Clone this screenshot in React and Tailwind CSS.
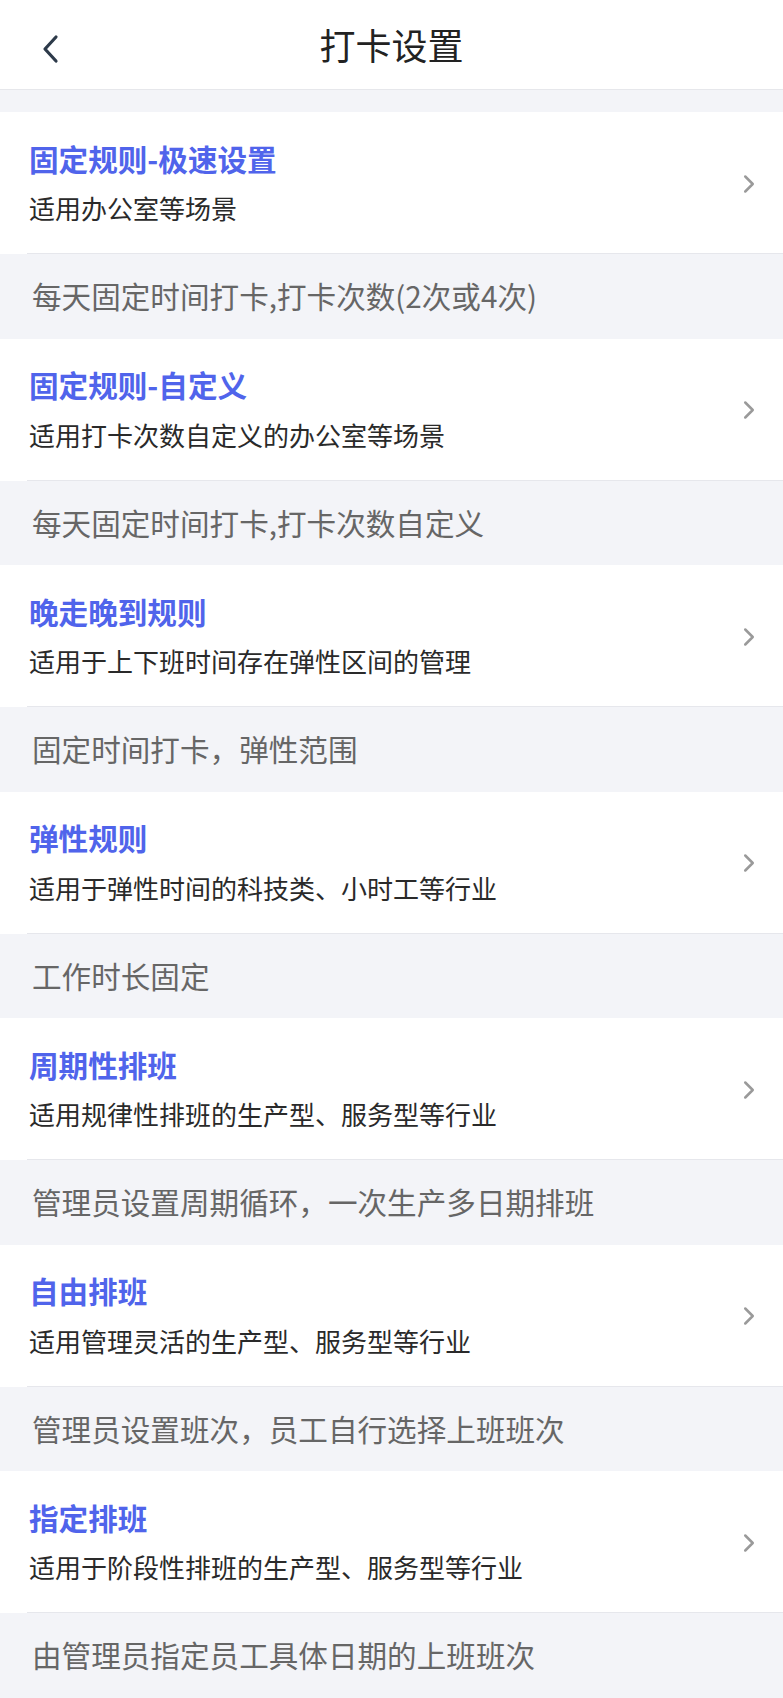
import { ChevronRight } from 'lucide-react';

const rules = [
  { title: '固定规则-极速设置', sub: '适用办公室等场景', desc: '每天固定时间打卡,打卡次数(2次或4次)' },
  { title: '固定规则-自定义', sub: '适用打卡次数自定义的办公室等场景', desc: '每天固定时间打卡,打卡次数自定义' },
  { title: '晚走晚到规则', sub: '适用于上下班时间存在弹性区间的管理', desc: '固定时间打卡，弹性范围' },
  { title: '弹性规则', sub: '适用于弹性时间的科技类、小时工等行业', desc: '工作时长固定' },
  { title: '周期性排班', sub: '适用规律性排班的生产型、服务型等行业', desc: '管理员设置周期循环，一次生产多日期排班' },
  { title: '自由排班', sub: '适用管理灵活的生产型、服务型等行业', desc: '管理员设置班次，员工自行选择上班班次' },
  { title: '指定排班', sub: '适用于阶段性排班的生产型、服务型等行业', desc: '由管理员指定员工具体日期的上班班次' },
];

const App = () => {
  return (
    <div className="min-h-screen bg-[#f3f4f8]" style={{ fontFamily: '"Noto Sans CJK SC", "Noto Sans", sans-serif' }}>
      {/* Header */}
      <div className="h-[90px] bg-white border-b border-[#e6e7eb] flex items-center relative">
        <div className="absolute left-[40px] top-[34px] w-[20px] h-[30px] flex items-center justify-center">
          <svg width="18" height="30" viewBox="0 0 18 30" fill="none">
            <path d="M15 3 L4 15 L15 27" stroke="#2d3a4a" strokeWidth="3.2" strokeLinecap="round" strokeLinejoin="round" />
          </svg>
        </div>
        <h1 className="w-full text-center text-[36px] text-[#222] leading-none -mt-[2px]">打卡设置</h1>
      </div>

      <div className="h-[22px]" />

      {rules.map((r, i) => (
        <div key={i}>
          <div className="h-[142px] bg-white flex items-center relative">
            <div className="flex-1 pl-[29px]">
              <p className="text-[29.6px] font-bold text-[#5064eb] leading-none -mt-[1px]">{r.title}</p>
              <p className="text-[26px] text-[#2a2a2a] leading-none mt-[22px]">{r.sub}</p>
            </div>
            <ChevronRight className="text-[#9a9a9a] mr-[19px] mt-[1px]" size={30} strokeWidth={2} />
            <div className="absolute left-[27px] right-0 bottom-0 h-px bg-[#e6e7ec]" />
          </div>
          <div className="h-[84.5px] flex items-center pl-[32px]">
            <p className="text-[29.6px] text-[#666] leading-none">{r.desc}</p>
          </div>
        </div>
      ))}
    </div>
  );
};

export default App;
